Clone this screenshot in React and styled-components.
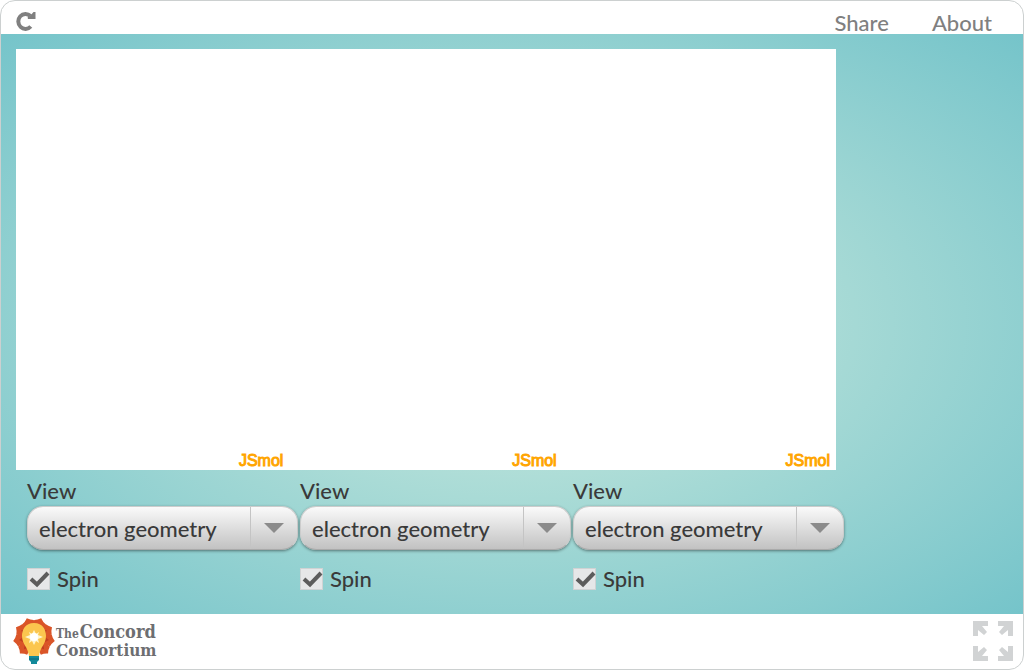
import React from "react";
import styled, { createGlobalStyle } from "styled-components";

const GlobalStyle = createGlobalStyle`
  *, *::before, *::after { box-sizing: border-box; }
  body { margin: 0; background: #fff; color: #3a3a3a; font-family: Lato, sans-serif; font-size: 22px; font-weight: 500; }
  button, select, input { font: inherit; color: inherit; margin: 0; }
`;

const Shell = styled.div`
  min-height: 100vh;
  display: flex;
  flex-direction: column;
  border: 1px solid #ccd0d0;
  border-radius: 15px;
  overflow: hidden;
  background: #fff;
`;

const TopBar = styled.header`
  height: 33px;
  display: flex;
  align-items: flex-start;
  justify-content: space-between;
  padding: 8px 31px 0 13px;
`;

const IconButton = styled.button`
  display: flex;
  padding: 2px;
  border: 0;
  background: none;
  color: #808080;
  cursor: pointer;
`;

const TopLinks = styled.nav`
  display: flex;
  gap: 43px;
`;

const TopLink = styled.a`
  color: #808080;
  line-height: 28px;
  text-decoration: none;
`;

const Stage = styled.main`
  flex: 1;
  display: flex;
  flex-direction: column;
  padding: 15px;
  background: radial-gradient(ellipse at center, #d0ecdf, #75c4ca);
`;

const Viewers = styled.div`
  flex: 1;
  min-height: 200px;
  width: 100%;
  max-width: 820px;
  display: grid;
  grid-template-columns: repeat(3, 1fr);
  background: #fff;
`;

const Viewer = styled.section`
  display: flex;
  align-items: flex-end;
  justify-content: flex-end;
  padding-right: 6px;
  color: #ffa500;
  font: 16px/18px "Liberation Sans", sans-serif;
  -webkit-text-stroke: 1px #ffa500;
`;

const Controls = styled.div`
  display: grid;
  grid-template-columns: repeat(3, 1fr);
  column-gap: 2px;
  width: 100%;
  max-width: 828px;
  padding: 6px 0 5px 11px;
`;

const Group = styled.div`
  display: flex;
  flex-direction: column;
`;

const Label = styled.label`
  line-height: 30px;
`;

const SelectBox = styled.div`
  position: relative;
  height: 44px;
`;

const Select = styled.select`
  appearance: none;
  width: 100%;
  height: 44px;
  padding: 0 52px 0 11px;
  border: 1px solid #ccc;
  border-bottom-color: #aaa;
  border-radius: 16px;
  background: linear-gradient(#fafafa, #c2c2c2);
  box-shadow: 0 1px 3px rgba(0, 0, 0, 0.45);
`;

const Arrow = styled.span`
  position: absolute;
  inset: 1px 1px 1px auto;
  width: 47px;
  display: flex;
  align-items: center;
  justify-content: center;
  border-left: 1px solid #c4c4c4;
  pointer-events: none;
`;

const Check = styled.label`
  display: flex;
  align-items: center;
  gap: 7px;
  margin-top: 14px;
  line-height: 30px;
`;

const CheckBoxFrame = styled.span`
  position: relative;
  display: flex;
`;

const CheckBox = styled.input`
  appearance: none;
  width: 23px;
  height: 22px;
  border: 1px solid #d0d3d4;
  background: #e6e7e8;
  & + svg { display: none; }
  &:checked + svg { display: block; }
`;

const Tick = styled.svg`
  position: absolute;
  inset: 0;
  pointer-events: none;
`;

const Footer = styled.footer`
  height: 55px;
  display: flex;
  align-items: center;
  justify-content: space-between;
  padding: 0 8px 2px 12px;
`;

const Brand = styled.a`
  display: flex;
  align-items: center;
  gap: 1px;
  color: #6d6e71;
  text-decoration: none;
`;

const BrandName = styled.span`
  display: flex;
  flex-direction: column;
  font: bold 17px/16px "DejaVu Serif Condensed", "DejaVu Serif", serif;
`;

const BrandTop = styled.span`
  display: flex;
  align-items: baseline;
  gap: 1px;
  font-size: 18px;
`;

const Small = styled.span`
  font-size: 12px;
`;

const Reload = () => (
  <svg width="20" height="20" viewBox="0 0 20 20" aria-hidden="true">
    <path d="M14.5 5A7.2 7.5 0 1 0 14.8 15.5" fill="none" stroke="currentColor" strokeWidth="4" />
    <path d="M19.5 1V8H12L11.5 6.5L14 5L17.5 1Z" fill="currentColor" />
  </svg>
);

const Expand = () => (
  <svg width="40" height="40" viewBox="0 0 40 40" fill="#d1d3d4" aria-hidden="true">
    {[[1, 1], [-1, 1], [1, -1], [-1, -1]].map(([x, y]) => (
      <path
        key={`${x}${y}`}
        transform={`translate(20 20) scale(${x} ${y})`}
        d="M-20-20H-5V-15H-11L-6-9L-9-6L-15-11V-5H-20Z"
      />
    ))}
  </svg>
);

const petals = [-138, 138, -98, 98, -59, 59, -20, 20];

const Sunburst = () => (
  <svg width="42" height="48" viewBox="0 0 42 48" aria-hidden="true">
    {petals.map((a) => (
      <path key={a} transform={`rotate(${a} 21 21)`} d="M21 21L16 9L15 4Q18 3 21 0Q24 3 27 4L26 9Z" fill="#da5528" />
    ))}
    {petals.map((a) => (
      <path key={a} transform={`rotate(${a} 21 21)`} d="M21 21L19 9L21 6L23 9Z" fill="#c23f1f" />
    ))}
    <path d="M21 6C12 6 9 13 9 19C9 27 15 30 16 39H26C27 30 33 27 33 19C33 13 30 6 21 6Z" fill="#fbc64e" />
    <path d="M21 13L23 17L26 15L25 18L30 20L25 22L26 26L23 24L21 28L19 24L16 26L17 22L12 20L17 18L16 15L19 17Z" fill="#fff6cf" />
    <circle cx="21" cy="20" r="4" fill="#fff" />
    <path d="M16 39H26V43L24 45V47H18V45L16 43Z" fill="#12899a" />
    <path d="M16 42H26" stroke="#0b6878" />
  </svg>
);

const groups = ["left", "middle", "right"];

export default function App() {
  return (
    <>
      <GlobalStyle />
      <Shell>
        <TopBar>
          <IconButton type="button" aria-label="Reload"><Reload /></IconButton>
          <TopLinks>
            <TopLink href="#share">Share</TopLink>
            <TopLink href="#about">About</TopLink>
          </TopLinks>
        </TopBar>
        <Stage>
          <Viewers>
            {groups.map((g) => <Viewer key={g}>JSmol</Viewer>)}
          </Viewers>
          <Controls>
            {groups.map((g) => (
              <Group key={g}>
                <Label htmlFor={`view-${g}`}>View</Label>
                <SelectBox>
                  <Select id={`view-${g}`}>
                    <option>electron geometry</option>
                  </Select>
                  <Arrow>
                    <svg width="20" height="10" viewBox="0 0 20 10" aria-hidden="true">
                      <path d="M0 0H20L10 10Z" fill="#8b8b8b" />
                    </svg>
                  </Arrow>
                </SelectBox>
                <Check>
                  <CheckBoxFrame>
                    <CheckBox type="checkbox" defaultChecked />
                    <Tick width="23" height="22" viewBox="0 0 23 22" aria-hidden="true">
                      <path d="M4 11L10 16.5L21 5" fill="none" stroke="#5c5c5c" strokeWidth="4" />
                    </Tick>
                  </CheckBoxFrame>
                  Spin
                </Check>
              </Group>
            ))}
          </Controls>
        </Stage>
        <Footer>
          <Brand href="#concord">
            <Sunburst />
            <BrandName>
              <BrandTop><Small>The</Small>Concord</BrandTop>
              <span>Consortium</span>
            </BrandName>
          </Brand>
          <IconButton type="button" aria-label="Full screen"><Expand /></IconButton>
        </Footer>
      </Shell>
    </>
  );
}
